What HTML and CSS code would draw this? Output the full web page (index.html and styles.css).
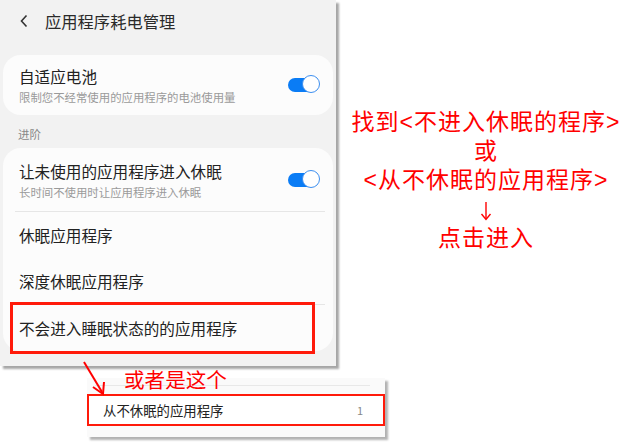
FILE: index.html
```html
<!DOCTYPE html>
<html lang="zh-CN">
<head>
    <meta charset="UTF-8">
    <title>应用程序耗电管理</title>
    <link rel="stylesheet" href="styles.css">
</head>
<body>
    <div class="page">
        <div class="top">
            <div class="phone">
                <div class="header">
                    <svg class="back" width="10" height="14" viewBox="0 0 10 14">
                        <path d="M7.5 1.5 L2.5 7 L7.5 12.5" fill="none" stroke="#333" stroke-width="1.6"/>
                    </svg>
                    <span class="title">应用程序耗电管理</span>
                </div>
                <div class="card">
                    <div class="row row-tall first">
                        <div class="text">
                            <div class="name">自适应电池</div>
                            <div class="desc">限制您不经常使用的应用程序的电池使用量</div>
                        </div>
                        <span class="toggle"></span>
                    </div>
                </div>
                <div class="label">进阶</div>
                <div class="card">
                    <div class="row row-tall">
                        <div class="text">
                            <div class="name">让未使用的应用程序进入休眠</div>
                            <div class="desc">长时间不使用时让应用程序进入休眠</div>
                        </div>
                        <span class="toggle"></span>
                    </div>
                    <div class="line"></div>
                    <div class="row"><div class="name">休眠应用程序</div></div>
                    <div class="row"><div class="name">深度休眠应用程序</div></div>
                    <div class="line"></div>
                    <div class="row">
                        <div class="name">不会进入睡眠状态的的应用程序</div>
                        <div class="mark"></div>
                    </div>
                </div>
            </div>
            <div class="note">
                <p>找到&lt;不进入休眠的程序&gt;</p>
                <p>或</p>
                <p>&lt;从不休眠的应用程序&gt;</p>
                <p class="down">
                    <svg width="12" height="20" viewBox="0 0 12 20">
                        <path d="M6 1 L6 18" stroke="#f00" stroke-width="1.4" fill="none"/>
                        <path d="M1.5 13 L6 18.5 L10.5 13" stroke="#f00" stroke-width="1.4" fill="none"/>
                    </svg>
                </p>
                <p>点击进入</p>
            </div>
        </div>
        <div class="extra">
            <div class="extra-line"></div>
            <div class="extra-row">
                <span>从不休眠的应用程序</span>
                <span class="count">1</span>
            </div>
        </div>
        <div class="or-this">或者是这个</div>
        <svg class="arrow" width="30" height="40" viewBox="0 0 30 40">
            <path d="M2 2 L20 32" stroke="#f00" stroke-width="2" fill="none"/>
            <path d="M11 27 L21 34 L22 22" stroke="#f00" stroke-width="2" fill="none"/>
        </svg>
    </div>
</body>
</html>
```

FILE: styles.css
```css
body {
    margin: 0;
    background: #ffffff;
    font-family: "Noto Sans CJK SC", "Noto Sans", sans-serif;
    color: #222222;
}
.page {
    position: relative;
    width: 630px;
    height: 445px;
    overflow: hidden;
}
.top {
    display: flex;
}
.phone {
    width: 336px;
    height: 366px;
    background: #f2f2f2;
    box-shadow: 3px 3px 2px rgba(0, 0, 0, 0.35);
    flex-shrink: 0;
}
.header {
    height: 42px;
    display: flex;
    align-items: center;
    padding-left: 19px;
}
.title {
    margin-left: 16px;
    font-size: 16.3px;
    color: #2a2a2a;
}
.card {
    margin: 0 3px;
    background: #fcfcfc;
    border-radius: 18px;
}
.header + .card {
    margin-top: 13px;
}
.row {
    position: relative;
    height: 46px;
    display: flex;
    align-items: center;
    padding: 0 13px 0 16px;
}
.row-tall {
    height: 63px;
    justify-content: space-between;
}
.row-tall.first {
    height: 60px;
}
.name {
    font-size: 15.6px;
    color: #222222;
    line-height: 20px;
}
.desc {
    font-size: 11.4px;
    color: #9a9a9a;
    line-height: 14px;
    margin-top: 4px;
}
.label {
    font-size: 11.5px;
    color: #888888;
    line-height: 16px;
    padding: 11px 0 6px 18px;
}
.line {
    height: 1px;
    background: #e6e6e6;
    margin: 0 8px 0 12px;
}
.toggle {
    position: relative;
    width: 30px;
    height: 14px;
    border-radius: 7px;
    background: #0a7cf5;
    margin-right: 2px;
}
.toggle::after {
    content: "";
    position: absolute;
    right: -2px;
    top: -3px;
    width: 16px;
    height: 16px;
    border-radius: 50%;
    background: #ffffff;
    border: 1.5px solid #3d8ff0;
}
.mark {
    position: absolute;
    left: 7px;
    top: -3px;
    width: 305px;
    height: 52px;
    border: 3px solid #ff1a0a;
    box-sizing: border-box;
}
/* right-hand hint text */
.note {
    flex: 1;
    text-align: center;
    padding: 108px 0 0 6px;
    color: #ff0000;
    font-family: "Liberation Sans", "Noto Sans CJK SC", sans-serif;
    font-size: 23px;
    letter-spacing: 1px;
}
.note p {
    margin: 0;
    line-height: 29px;
}
.note .down {
    height: 29px;
    display: flex;
    justify-content: center;
    align-items: center;
    padding-top: 3px;
    box-sizing: border-box;
}
.extra {
    margin: 12px 0 0 87px;
    width: 298px;
    height: 59px;
    background: #fafafa;
    box-shadow: 3px 3px 2px rgba(0, 0, 0, 0.3);
}
.extra-line {
    height: 1px;
    margin: 0 15px 0 8px;
    position: relative;
    top: 7px;
    background: #e8e8e8;
}
.extra-row {
    margin-top: 15px;
    height: 32px;
    border: 2px solid #ff1a0a;
    box-sizing: border-box;
    background: #ffffff;
    display: flex;
    align-items: center;
    justify-content: space-between;
    padding: 0 20px 0 14px;
    font-size: 13.4px;
    color: #222222;
}
.count {
    font-size: 11px;
    color: #888888;
}
.or-this {
    position: absolute;
    left: 124px;
    top: 366px;
    font-size: 20.6px;
    line-height: 26px;
    color: #ff0000;
}
.arrow {
    position: absolute;
    left: 82px;
    top: 360px;
}
```
